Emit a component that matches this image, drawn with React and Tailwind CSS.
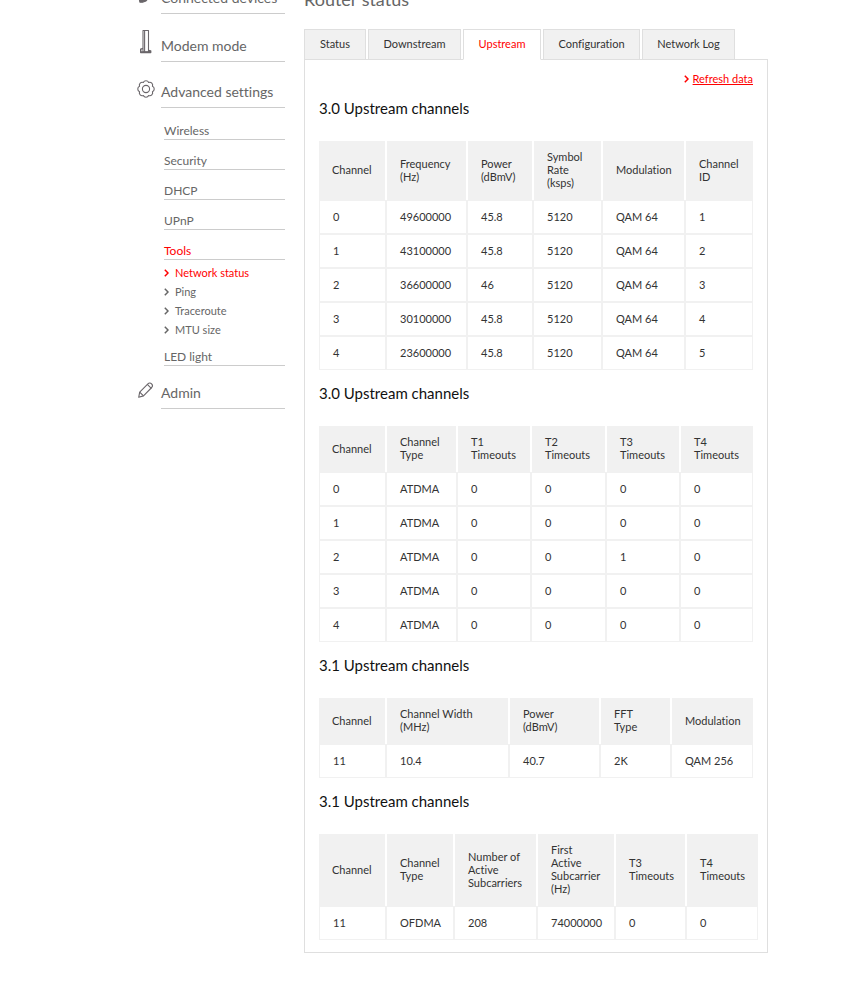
import React from 'react'
import clsx from 'clsx'

const tabs = [
  { name: 'Status', width: 'w-[62px]' },
  { name: 'Downstream', width: 'w-[93px]' },
  { name: 'Upstream', width: 'w-[78px]', active: true },
  { name: 'Configuration', width: 'w-[97px]' },
  { name: 'Network Log', width: 'w-[93px]' }
]

const tables = [
  {
    title: '3.0 Upstream channels',
    columns: [
      { label: 'Channel', width: 'w-[67px]' },
      { label: 'Frequency\n(Hz)', width: 'w-[81px]' },
      { label: 'Power\n(dBmV)', width: 'w-[66px]' },
      { label: 'Symbol\nRate\n(ksps)', width: 'w-[69px]' },
      { label: 'Modulation', width: 'w-[83px]' },
      { label: 'Channel\nID', width: 'w-[68px]' }
    ],
    rows: [
      ['0', '49600000', '45.8', '5120', 'QAM 64', '1'],
      ['1', '43100000', '45.8', '5120', 'QAM 64', '2'],
      ['2', '36600000', '46', '5120', 'QAM 64', '3'],
      ['3', '30100000', '45.8', '5120', 'QAM 64', '4'],
      ['4', '23600000', '45.8', '5120', 'QAM 64', '5']
    ]
  },
  {
    title: '3.0 Upstream channels',
    columns: [
      { label: 'Channel', width: 'w-[67px]' },
      { label: 'Channel\nType', width: 'w-[71px]' },
      { label: 'T1\nTimeouts', width: 'w-[74px]' },
      { label: 'T2\nTimeouts', width: 'w-[75px]' },
      { label: 'T3\nTimeouts', width: 'w-[74px]' },
      { label: 'T4\nTimeouts', width: 'w-[73px]' }
    ],
    rows: [
      ['0', 'ATDMA', '0', '0', '0', '0'],
      ['1', 'ATDMA', '0', '0', '0', '0'],
      ['2', 'ATDMA', '0', '0', '1', '0'],
      ['3', 'ATDMA', '0', '0', '0', '0'],
      ['4', 'ATDMA', '0', '0', '0', '0']
    ]
  },
  {
    title: '3.1 Upstream channels',
    columns: [
      { label: 'Channel', width: 'w-[67px]' },
      { label: 'Channel Width\n(MHz)', width: 'w-[123px]' },
      { label: 'Power\n(dBmV)', width: 'w-[91px]' },
      { label: 'FFT\nType', width: 'w-[71px]' },
      { label: 'Modulation', width: 'w-[82px]' }
    ],
    rows: [['11', '10.4', '40.7', '2K', 'QAM 256']]
  },
  {
    title: '3.1 Upstream channels',
    columns: [
      { label: 'Channel', width: 'w-[67px]' },
      { label: 'Channel\nType', width: 'w-[68px]' },
      { label: 'Number of\nActive\nSubcarriers', width: 'w-[83px]' },
      { label: 'First\nActive\nSubcarrier\n(Hz)', width: 'w-[78px]' },
      { label: 'T3\nTimeouts', width: 'w-[71px]' },
      { label: 'T4\nTimeouts', width: 'w-[72px]' }
    ],
    rows: [['11', 'OFDMA', '208', '74000000', '0', '0']]
  }
]

const NavIcon = ({ children }) => (
  <svg
    className="w-6 h-[26px] shrink-0 mb-[7px] text-[#6a666a]"
    viewBox="0 0 24 26"
    fill="none"
    stroke="currentColor"
    strokeWidth="1.1"
    strokeLinejoin="round"
    aria-hidden="true"
  >
    {children}
  </svg>
)

const DevicesIcon = () => (
  <NavIcon>
    <path d="M2 12h10v5H2z" />
    <path d="M2.500 19.500l2-1.500 6.500-.500-2 2.500-3.500 1.300H3z" fill="currentColor" />
  </NavIcon>
)

const ModemIcon = () => (
  <NavIcon>
    <path d="M6 1.500h5.500v21.500H6z" />
    <path d="M7.600 1.500v21.500" />
    <path d="M6 19.500l-2.300.7v3.300h10v-1.500l-2.200-.7M3.700 23h10" strokeWidth="1.400" />
  </NavIcon>
)

const GearIcon = () => (
  <NavIcon>
    <path d="M15.450 11.330a2.900 2.900 0 0 1 0 5.340a2.900 2.900 0 0 1-3.780 3.780a2.900 2.900 0 0 1-5.340 0a2.900 2.900 0 0 1-3.780-3.780a2.900 2.900 0 0 1 0-5.340a2.900 2.900 0 0 1 3.780-3.780a2.900 2.900 0 0 1 5.340 0a2.900 2.900 0 0 1 3.780 3.780z" />
    <circle cx="9" cy="14" r="3.600" />
  </NavIcon>
)

const PencilIcon = () => (
  <NavIcon>
    <path d="M1.700 21.300l1-5.200 8.200-8.300c1.200-1.200 2.600-1 3.700.1s1.200 2.400.1 3.600L6.500 19.900z" />
    <path d="M10.300 8.400l4 3.900M2.700 16.100l3.800 3.800" />
  </NavIcon>
)

const Chevron = () => (
  <svg className="w-[5px] h-2 shrink-0" viewBox="0 0 5 8" fill="none" stroke="currentColor" strokeWidth="1.5" aria-hidden="true">
    <path d="M0.800 0.800L4 4L0.800 7.200" />
  </svg>
)

const NavItem = ({ icon, label, height }) => (
  <a href="#" className={clsx('flex items-end', height)}>
    {icon}
    <span className="flex-1 pb-[5px] border-b border-[#ccc] text-[14px] leading-5">{label}</span>
  </a>
)

const SubItem = ({ label, active, height = 'h-[30px]' }) => (
  <a
    href="#"
    className={clsx('flex items-end border-b border-[#ccc] text-[12px] leading-4', height, active && 'text-[#f00]')}
  >
    {label}
  </a>
)

const ToolLink = ({ label, active }) => (
  <li>
    <a href="#" className={clsx('flex items-center gap-1.5 text-[11px] leading-[19px]', active && 'text-[#f00]')}>
      <Chevron />
      {label}
    </a>
  </li>
)

const SideNav = () => (
  <nav className="w-[148px] shrink-0 text-[#666]">
    <NavItem icon={<DevicesIcon />} label="Connected devices" height="h-[26px]" />
    <NavItem icon={<ModemIcon />} label="Modem mode" height="h-[48px]" />
    <NavItem icon={<GearIcon />} label="Advanced settings" height="h-[46px]" />
    <div className="ml-[27px] pt-0.5">
      <SubItem label="Wireless" />
      <SubItem label="Security" />
      <SubItem label="DHCP" />
      <SubItem label="UPnP" />
      <SubItem label="Tools" active />
      <ul className="pt-[3px]">
        <ToolLink label="Network status" active />
        <ToolLink label="Ping" />
        <ToolLink label="Traceroute" />
        <ToolLink label="MTU size" />
      </ul>
      <SubItem label="LED light" height="h-[27px]" />
    </div>
    <NavItem icon={<PencilIcon />} label="Admin" height="h-[43px]" />
  </nav>
)

const ChannelTable = ({ title, columns, rows }) => (
  <section className="pt-3">
    <h2 className="mb-[22px] text-[15px] leading-[22px] text-[#111]">{title}</h2>
    <table className="w-full min-w-max table-fixed border-separate border-spacing-0 text-[11px] leading-[13px] text-[#333]">
      <thead>
        <tr>
          {columns.map((column, i) => (
            <th
              key={i}
              scope="col"
              className={clsx(
                'pt-[9px] pb-[11px] pl-[13px] text-left font-normal whitespace-pre bg-[#f1f1f1] border-x border-white first:border-l-0 last:border-r-0',
                column.width
              )}
            >
              {column.label}
            </th>
          ))}
        </tr>
      </thead>
      <tbody>
        {rows.map((row, i) => (
          <tr key={i}>
            {row.map((cell, j) => (
              <td key={j} className="h-[34px] pb-0.5 pl-[13px] border border-[#f1f1f1]">
                {cell}
              </td>
            ))}
          </tr>
        ))}
      </tbody>
    </table>
  </section>
)

const App = () => (
  <div className="-mt-3 flex gap-[19px] pl-[137px] pr-[74px] pb-12 bg-white font-['Lato',sans-serif] [font-variant-ligatures:none]">
    <SideNav />
    <main className="flex-1 min-w-0">
      <h1 className="mb-[19px] text-[18px] leading-[22px] text-[#666]">Router status</h1>
      <div className="relative z-10 -mb-px flex gap-0.5" role="tablist">
        {tabs.map((tab) => (
          <button
            key={tab.name}
            type="button"
            role="tab"
            aria-selected={Boolean(tab.active)}
            className={clsx(
              'h-[31px] border border-[#dfdfdf] text-[11px] whitespace-nowrap',
              tab.width,
              tab.active ? 'bg-white border-b-white text-[#f00]' : 'bg-[#f1f1f1] text-[#333]'
            )}
          >
            {tab.name}
          </button>
        ))}
      </div>
      <div className="px-3.5 pt-3 pb-3 border border-[#dfdfdf]">
        <div className="flex items-center justify-end gap-1 text-[11px] leading-[13px] text-[#f00]">
          <Chevron />
          <a href="#" className="underline">Refresh data</a>
        </div>
        {tables.map((table, i) => (
          <ChannelTable key={i} {...table} />
        ))}
      </div>
    </main>
  </div>
)

export default App
